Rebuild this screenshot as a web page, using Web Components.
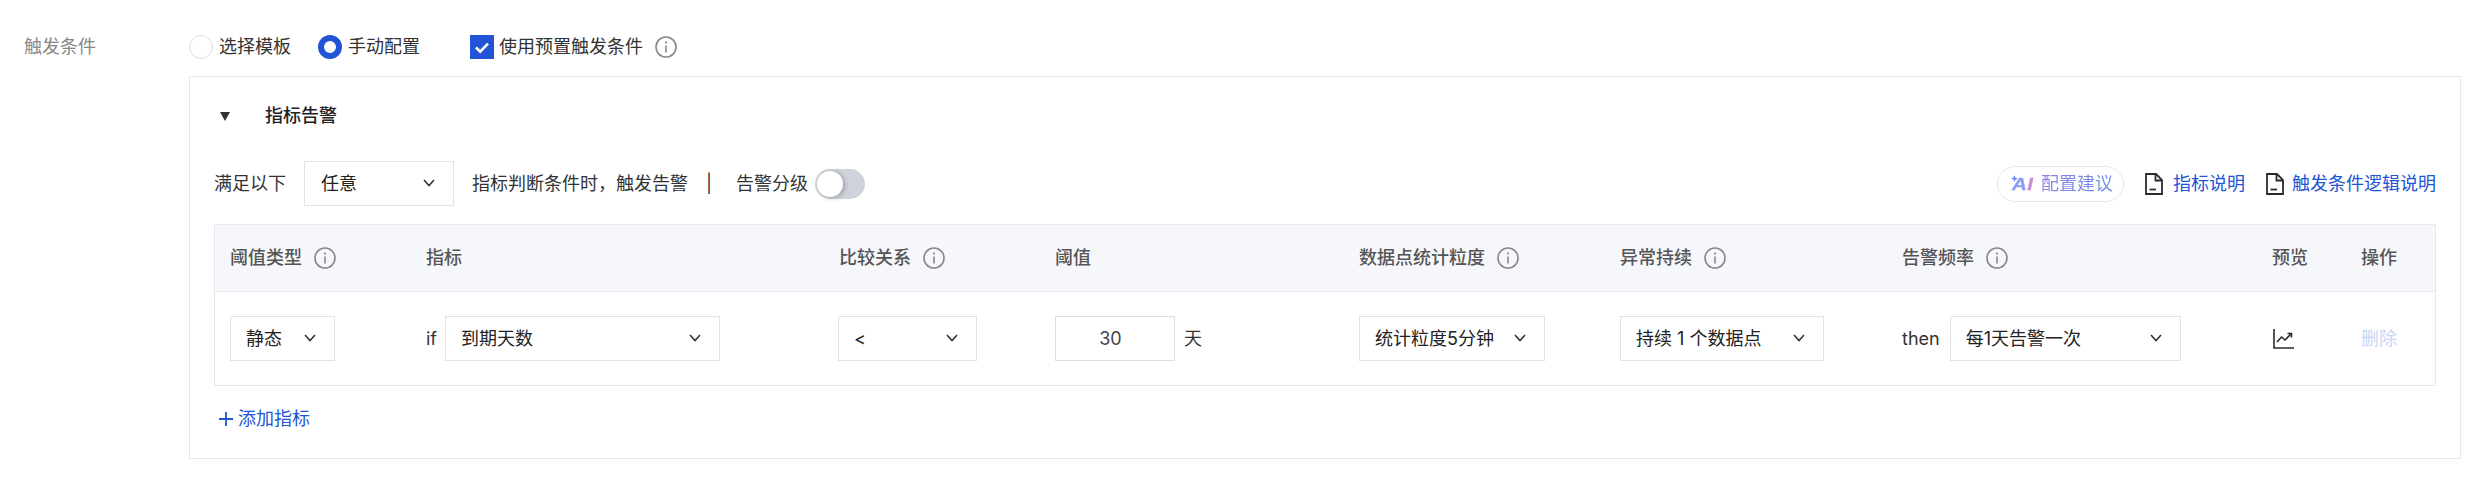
<!DOCTYPE html>
<html lang="zh-CN">
<head>
<meta charset="utf-8">
<title>触发条件</title>
<style>
    html, body { margin: 0; background: #fff; }
    body {
        font: 18px/26px Inter, "Noto Sans CJK SC", sans-serif;
        color: #333;
    }
</style>
</head>
<body>

<trigger-field label="触发条件">
    <option-bar slot="options">
        <radio-item>选择模板</radio-item>
        <radio-item checked>手动配置</radio-item>
        <check-item>使用预置触发条件</check-item>
        <info-icon></info-icon>
    </option-bar>

    <alarm-card title="指标告警">
        <alarm-toolbar slot="toolbar">
            <span>满足以下</span>
            <select-box style="width: 150px; margin: 0 18px 0 18px" pad="17">任意</select-box>
            <span>指标判断条件时，触发告警</span>
            <span style="margin: 0 24px 0 18px">|</span>
            <span>告警分级</span>
            <toggle-switch style="margin-left: 7px"></toggle-switch>
            <tool-links slot="right">
                <ai-pill>配置建议</ai-pill>
                <doc-link style="margin-left: 21px; gap: 10px">指标说明</doc-link>
                <doc-link style="margin-left: 21px; gap: 8px">触发条件逻辑说明</doc-link>
            </tool-links>
        </alarm-toolbar>

        <rule-table slot="table">
            <rule-row head>
                <rule-cell>阈值类型<info-icon></info-icon></rule-cell>
                <rule-cell>指标</rule-cell>
                <rule-cell>比较关系<info-icon></info-icon></rule-cell>
                <rule-cell>阈值</rule-cell>
                <rule-cell>数据点统计粒度<info-icon></info-icon></rule-cell>
                <rule-cell>异常持续<info-icon></info-icon></rule-cell>
                <rule-cell>告警频率<info-icon></info-icon></rule-cell>
                <rule-cell>预览</rule-cell>
                <rule-cell>操作</rule-cell>
            </rule-row>
            <rule-row>
                <rule-cell><select-box style="width: 105px">静态</select-box></rule-cell>
                <rule-cell>if<select-box style="width: 275px; margin-left: 8px">到期天数</select-box></rule-cell>
                <rule-cell><select-box style="width: 139px; margin-left: -1px">&lt;</select-box></rule-cell>
                <rule-cell><num-input style="width: 120px">30</num-input><span style="margin-left: 9px">天</span></rule-cell>
                <rule-cell><select-box style="width: 186px">统计粒度5分钟</select-box></rule-cell>
                <rule-cell><select-box style="width: 204px">持续 1 个数据点</select-box></rule-cell>
                <rule-cell>then<select-box style="width: 231px; margin-left: 10px">每1天告警一次</select-box></rule-cell>
                <rule-cell><chart-icon style="margin-left: 1px"></chart-icon></rule-cell>
                <rule-cell><span style="color: #c5d6f6">删除</span></rule-cell>
            </rule-row>
        </rule-table>

        <add-link slot="footer">添加指标</add-link>
    </alarm-card>
</trigger-field>

<script>
class TriggerField extends HTMLElement {
    constructor() {
        super();
        this.attachShadow({ mode: "open" });
        this.shadowRoot.innerHTML = `
            <style>
                :host { display: flex; padding: 33px 15px 24px 0; box-sizing: border-box; }
                .label { width: 165px; padding: 1px 0 0 24px; color: #888; flex: none; }
                .body { flex: 1; min-width: 0; }
            </style>
            <div class="label">${this.getAttribute('label')}</div>
            <div class="body">
                <slot name="options"></slot>
                <slot></slot>
            </div>
        `;
    }
}

class OptionBar extends HTMLElement {
    constructor() {
        super();
        this.attachShadow({ mode: "open" });
        this.shadowRoot.innerHTML = `
            <style>
                :host { display: flex; align-items: center; height: 28px; margin-bottom: 15px; color: #333; }
                ::slotted(radio-item) { margin-right: 27px; }
                ::slotted(check-item) { margin-left: 23px; }
            </style>
            <slot></slot>
        `;
    }
}

class RadioItem extends HTMLElement {
    constructor() {
        super();
        this.attachShadow({ mode: "open" });
        this.shadowRoot.innerHTML = `
            <style>
                :host { display: inline-flex; align-items: center; gap: 6px; cursor: pointer; }
                .dot {
                    width: 24px;
                    height: 24px;
                    box-sizing: border-box;
                    border: 1px solid #d9dce6;
                    border-radius: 50%;
                    background: #fff;
                }
                :host([checked]) .dot { border: 6px solid #2155d5; }
            </style>
            <div class="dot"></div>
            <slot></slot>
        `;
    }
}

class CheckItem extends HTMLElement {
    constructor() {
        super();
        this.attachShadow({ mode: "open" });
        this.shadowRoot.innerHTML = `
            <style>
                :host { display: inline-flex; align-items: center; gap: 5px; cursor: pointer; }
                svg { display: block; }
            </style>
            <svg width="24" height="24" viewBox="0 0 24 24">
                <rect width="24" height="24" fill="#2155d5"/>
                <path d="M6 12.5l4.2 4.2L18 8.6" fill="none" stroke="#fff" stroke-width="2.6"/>
            </svg>
            <slot></slot>
        `;
    }
}

class InfoIcon extends HTMLElement {
    constructor() {
        super();
        this.attachShadow({ mode: "open" });
        this.shadowRoot.innerHTML = `
            <style>
                :host { display: inline-block; width: 22px; height: 22px; flex: none; margin-left: 12px; }
                svg { display: block; }
            </style>
            <svg width="22" height="22" viewBox="0 0 22 22" fill="none" stroke="#888">
                <circle cx="11" cy="11" r="10" stroke-width="1.6"/>
                <path d="M11 9.5V16.5" stroke-width="1.6"/>
                <path d="M11 5.5V7.4" stroke-width="1.8"/>
            </svg>
        `;
    }
}

class AlarmCard extends HTMLElement {
    constructor() {
        super();
        this.attachShadow({ mode: "open" });
        this.shadowRoot.innerHTML = `
            <style>
                :host {
                    display: block;
                    border: 1px solid #e7e8ef;
                    padding: 26px 24px 25px 24px;
                }
                .head { display: flex; align-items: center; height: 26px; margin-bottom: 32px; color: #222; font-weight: 500; }
                .arrow {
                    width: 0;
                    height: 0;
                    margin: 0 35px 0 6px;
                    border-left: 5.5px solid transparent;
                    border-right: 5.5px solid transparent;
                    border-top: 9px solid #333;
                }
                .foot { margin-top: 20px; }
            </style>
            <div class="head"><span class="arrow"></span><span>${this.getAttribute('title')}</span></div>
            <slot name="toolbar"></slot>
            <slot name="table"></slot>
            <div class="foot"><slot name="footer"></slot></div>
        `;
        this.removeAttribute('title');
    }
}

class AlarmToolbar extends HTMLElement {
    constructor() {
        super();
        this.attachShadow({ mode: "open" });
        this.shadowRoot.innerHTML = `
            <style>
                :host { display: flex; align-items: center; height: 45px; margin-bottom: 18px; color: #333; }
                .right { margin-left: auto; }
            </style>
            <slot></slot>
            <div class="right"><slot name="right"></slot></div>
        `;
    }
}

class ToolLinks extends HTMLElement {
    constructor() {
        super();
        this.attachShadow({ mode: "open" });
        this.shadowRoot.innerHTML = `
            <style>
                :host { display: flex; align-items: center; }
            </style>
            <slot></slot>
        `;
    }
}

class SelectBox extends HTMLElement {
    constructor() {
        super();
        this.attachShadow({ mode: "open" });
        const pad = this.getAttribute('pad') || 16;
        this.shadowRoot.innerHTML = `
            <style>
                :host {
                    display: flex;
                    align-items: center;
                    flex: none;
                    height: 45px;
                    box-sizing: border-box;
                    border: 1px solid #e1e2e8;
                    padding: 0 18px 0 ${pad - 1}px;
                    color: #222;
                    background: #fff;
                    font-weight: 400;
                }
                .text { flex: 1; white-space: nowrap; }
                svg { display: block; flex: none; margin-top: -2px; }
            </style>
            <span class="text"><slot></slot></span>
            <svg width="12" height="8" viewBox="0 0 12 8" fill="none" stroke="#333" stroke-width="1.6">
                <path d="M1 1l5 5.5L11 1"/>
            </svg>
        `;
    }
}

class NumInput extends HTMLElement {
    constructor() {
        super();
        this.attachShadow({ mode: "open" });
        this.shadowRoot.innerHTML = `
            <style>
                :host {
                    display: flex;
                    align-items: center;
                    justify-content: center;
                    flex: none;
                    height: 45px;
                    box-sizing: border-box;
                    border: 1px solid #dcdde3;
                    padding-right: 9px;
                    color: #444;
                }
            </style>
            <slot></slot>
        `;
    }
}

class ToggleSwitch extends HTMLElement {
    constructor() {
        super();
        this.attachShadow({ mode: "open" });
        this.shadowRoot.innerHTML = `
            <style>
                :host { display: block; flex: none; width: 50px; height: 30px; border-radius: 15px; background: #cfd4dc; }
                .thumb {
                    width: 26px;
                    height: 26px;
                    margin: 2px;
                    border-radius: 50%;
                    background: #fff;
                    box-shadow: 2px 1px 5px rgba(0, 0, 0, .25);
                }
            </style>
            <div class="thumb"></div>
        `;
    }
}

class AiPill extends HTMLElement {
    constructor() {
        super();
        this.attachShadow({ mode: "open" });
        this.shadowRoot.innerHTML = `
            <style>
                :host {
                    display: inline-flex;
                    align-items: center;
                    height: 36px;
                    width: 127px;
                    box-sizing: border-box;
                    padding-left: 13px;
                    border: 1px solid #e6e8f0;
                    border-radius: 18px;
                    color: #7d82e6;
                }
                .logo { position: relative; display: block; width: 22px; height: 20px; margin-right: 8px; }
                .logo svg { position: absolute; left: 0; top: 1px; }
                .ai {
                    position: absolute;
                    left: 1px;
                    top: 0;
                    font: italic 700 17px/22px "Liberation Sans", sans-serif;
                    letter-spacing: .5px;
                    transform: scaleX(1.2);
                    transform-origin: left center;
                    -webkit-text-stroke: .3px currentColor;
                }
                .a { color: #8a9ff3; }
                .i { color: #cc8cdc; }
                .text {
                    background: linear-gradient(90deg, #8d80e6 0%, #6f8fe8 100%);
                    -webkit-background-clip: text;
                    background-clip: text;
                    color: transparent;
                    white-space: nowrap;
                }
            </style>
            <span class="logo">
                <span class="ai"><span class="a">A</span><span class="i">I</span></span>
                <svg width="7" height="7" viewBox="0 0 8 8"><path d="M4 0l1 3 3 1-3 1-1 3-1-3-3-1 3-1z" fill="#5d7bf0"/></svg>
            </span>
            <span class="text"><slot></slot></span>
        `;
    }
}

class DocLink extends HTMLElement {
    constructor() {
        super();
        this.attachShadow({ mode: "open" });
        this.shadowRoot.innerHTML = `
            <style>
                :host { display: inline-flex; align-items: center; gap: 9px; color: #2155d5; cursor: pointer; }
                svg { display: block; flex: none; }
            </style>
            <svg width="18" height="22" viewBox="0 0 18 22" fill="none" stroke="#2b2b2b" stroke-width="1.8">
                <path d="M1 1h10l6 6v14H1z"/>
                <path d="M10.5 1v6.5H17"/>
                <path d="M4.5 16.5h6.5"/>
            </svg>
            <slot></slot>
        `;
    }
}

class RuleTable extends HTMLElement {
    constructor() {
        super();
        this.attachShadow({ mode: "open" });
        this.shadowRoot.innerHTML = `
            <style>
                :host { display: block; border: 1px solid #e7e8ef; }
            </style>
            <slot></slot>
        `;
    }
}

class RuleRow extends HTMLElement {
    constructor() {
        super();
        this.attachShadow({ mode: "open" });
        this.shadowRoot.innerHTML = `
            <style>
                :host {
                    display: grid;
                    grid-template-columns: 196px 413px 216px 304px 261px 282px 370px 89px 1fr;
                    align-items: center;
                    padding-left: 15px;
                    height: 93px;
                    color: #333;
                }
                :host([head]) {
                    height: 66px;
                    background: #f6f7fb;
                    border-bottom: 1px solid #e7e8ef;
                    color: #555;
                    font-weight: 500;
                }
            </style>
            <slot></slot>
        `;
    }
}

class RuleCell extends HTMLElement {
    constructor() {
        super();
        this.attachShadow({ mode: "open" });
        this.shadowRoot.innerHTML = `
            <style>
                :host { display: flex; align-items: center; white-space: nowrap; }
            </style>
            <slot></slot>
        `;
    }
}

class ChartIcon extends HTMLElement {
    constructor() {
        super();
        this.attachShadow({ mode: "open" });
        this.shadowRoot.innerHTML = `
            <style>
                :host { display: block; width: 21px; height: 20px; }
                svg { display: block; }
            </style>
            <svg width="21" height="20" viewBox="0 0 21 20" fill="none" stroke="#2b2b2b" stroke-width="1.6">
                <path d="M1 0v19h20"/>
                <path d="M4 13l4.5-5 3.5 3 6-6"/>
                <path d="M14.5 4.5h4v4"/>
            </svg>
        `;
    }
}

class AddLink extends HTMLElement {
    constructor() {
        super();
        this.attachShadow({ mode: "open" });
        this.shadowRoot.innerHTML = `
            <style>
                :host { display: inline-flex; align-items: center; gap: 5px; margin-left: 5px; color: #2155d5; cursor: pointer; }
                svg { display: block; }
            </style>
            <svg width="14" height="14" viewBox="0 0 14 14" stroke="#2155d5" stroke-width="1.8">
                <path d="M7 0v14M0 7h14"/>
            </svg>
            <slot></slot>
        `;
    }
}

customElements.define('trigger-field', TriggerField);
customElements.define('option-bar', OptionBar);
customElements.define('radio-item', RadioItem);
customElements.define('check-item', CheckItem);
customElements.define('info-icon', InfoIcon);
customElements.define('alarm-card', AlarmCard);
customElements.define('alarm-toolbar', AlarmToolbar);
customElements.define('tool-links', ToolLinks);
customElements.define('select-box', SelectBox);
customElements.define('num-input', NumInput);
customElements.define('toggle-switch', ToggleSwitch);
customElements.define('ai-pill', AiPill);
customElements.define('doc-link', DocLink);
customElements.define('rule-table', RuleTable);
customElements.define('rule-row', RuleRow);
customElements.define('rule-cell', RuleCell);
customElements.define('chart-icon', ChartIcon);
customElements.define('add-link', AddLink);
</script>
</body>
</html>
